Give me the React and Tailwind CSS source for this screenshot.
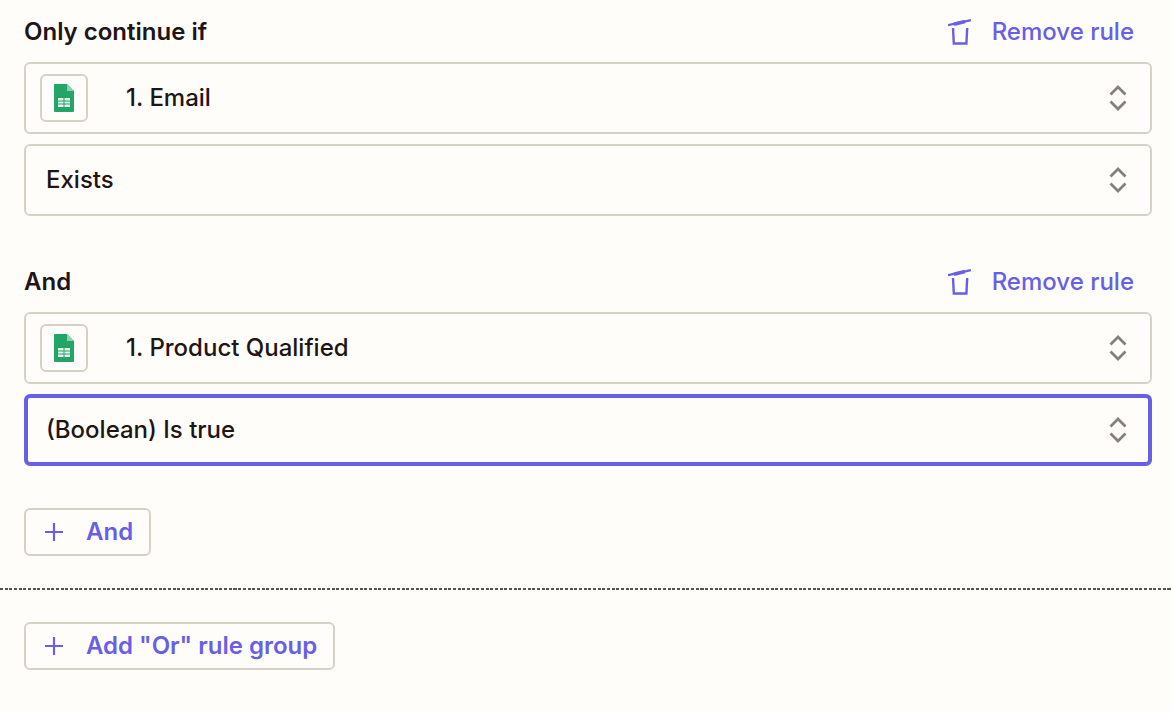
const F = { fontFamily: "Inter, sans-serif" };

function Trash() {
  return (
    <svg width="26" height="30" viewBox="0 0 26 30" fill="none" stroke="#6760e6" strokeWidth="2.4">
      <path d="M0 8.2 L23 3.2" />
      <path d="M6 7.2 L17 4.6" strokeWidth="3.6" />
      <path d="M5 11 L5.8 26.5 H18.4 L19.2 11" />
    </svg>
  );
}

function Chevrons() {
  return (
    <svg width="20" height="28" viewBox="0 0 20 28" fill="none" stroke="#858079" strokeWidth="2.8">
      <path d="M2.5 10.5 L10 3 L17.5 10.5" />
      <path d="M2.5 17.5 L10 25 L17.5 17.5" />
    </svg>
  );
}

function Sheets() {
  return (
    <svg width="20" height="28" viewBox="0 0 20 28">
      <path d="M1 0 H13 L20 7 V27 a1 1 0 0 1 -1 1 H1 a1 1 0 0 1 -1 -1 V1 a1 1 0 0 1 1 -1 Z" fill="#23a566" />
      <path d="M13 0 L20 7 H13 Z" fill="#8ed1b1" />
      <rect x="4" y="14" width="12" height="9" fill="#e6f5ee" />
      <path d="M4 17 H16 M4 20 H16 M10 14 V23" stroke="#23a566" strokeWidth="1" />
    </svg>
  );
}

function Plus() {
  return (
    <svg width="20" height="20" viewBox="0 0 20 20" stroke="#6760e6" strokeWidth="2.2" fill="none">
      <path d="M10 1 V19 M1 10 H19" />
    </svg>
  );
}

function Header({ label }) {
  return (
    <div className="h-[62px] pt-[2px] flex items-center justify-between pr-[18px]">
      <span className="text-[24px] font-semibold text-[#201515]">{label}</span>
      <button className="flex items-center gap-[18px] text-[24px] font-medium text-[#6760e6]">
        <Trash />
        <span>Remove rule</span>
      </button>
    </div>
  );
}

function FieldWithIcon({ label }) {
  return (
    <div className="h-[72px] border-2 border-[#d7d2c8] rounded-[6px] flex items-center pl-[14px] pr-[22px]">
      <div className="w-[48px] h-[48px] border-2 border-[#d7d2c8] rounded-[6px] flex items-center justify-center">
        <Sheets />
      </div>
      <span className="ml-[38px] flex-1 text-[24px] font-medium text-[#201515]">{label}</span>
      <Chevrons />
    </div>
  );
}

function Field({ label, active }) {
  return (
    <div className={active
      ? "h-[72px] border-[4px] border-[#6760e6] rounded-[6px] flex items-center pl-[18px] pr-[20px]"
      : "h-[72px] border-2 border-[#d7d2c8] rounded-[6px] flex items-center pl-[20px] pr-[22px]"}>
      <span className="flex-1 text-[24px] font-medium text-[#201515]">{label}</span>
      <Chevrons />
    </div>
  );
}

function AddButton({ label }) {
  return (
    <button className="h-[48px] border-2 border-[#d7d2c8] rounded-[6px] flex items-center pl-[18px] pr-[16px] gap-[22px] text-[24px] font-semibold text-[#6760e6]">
      <Plus />
      <span>{label}</span>
    </button>
  );
}

export default function App() {
  return (
    <div style={F} className="w-[1172px] h-[712px] bg-[#fffdf9] overflow-hidden">
      <div className="pl-[24px] pr-[20px]">
        <Header label="Only continue if" />
        <div className="flex flex-col gap-[10px]">
          <FieldWithIcon label="1. Email" />
          <Field label="Exists" />
        </div>
        <div className="mt-[34px]">
          <Header label="And" />
        </div>
        <div className="flex flex-col gap-[10px]">
          <FieldWithIcon label="1. Product Qualified" />
          <Field label="(Boolean) Is true" active />
        </div>
        <div className="mt-[42px] flex">
          <AddButton label="And" />
        </div>
      </div>
      <div className="mt-[32px] h-[2px] bg-[repeating-linear-gradient(90deg,#57534c_0,#57534c_3px,transparent_3px,transparent_4.67px)]" />
      <div className="pl-[24px] pt-[32px] flex">
        <AddButton label={'Add "Or" rule group'} />
      </div>
    </div>
  );
}
